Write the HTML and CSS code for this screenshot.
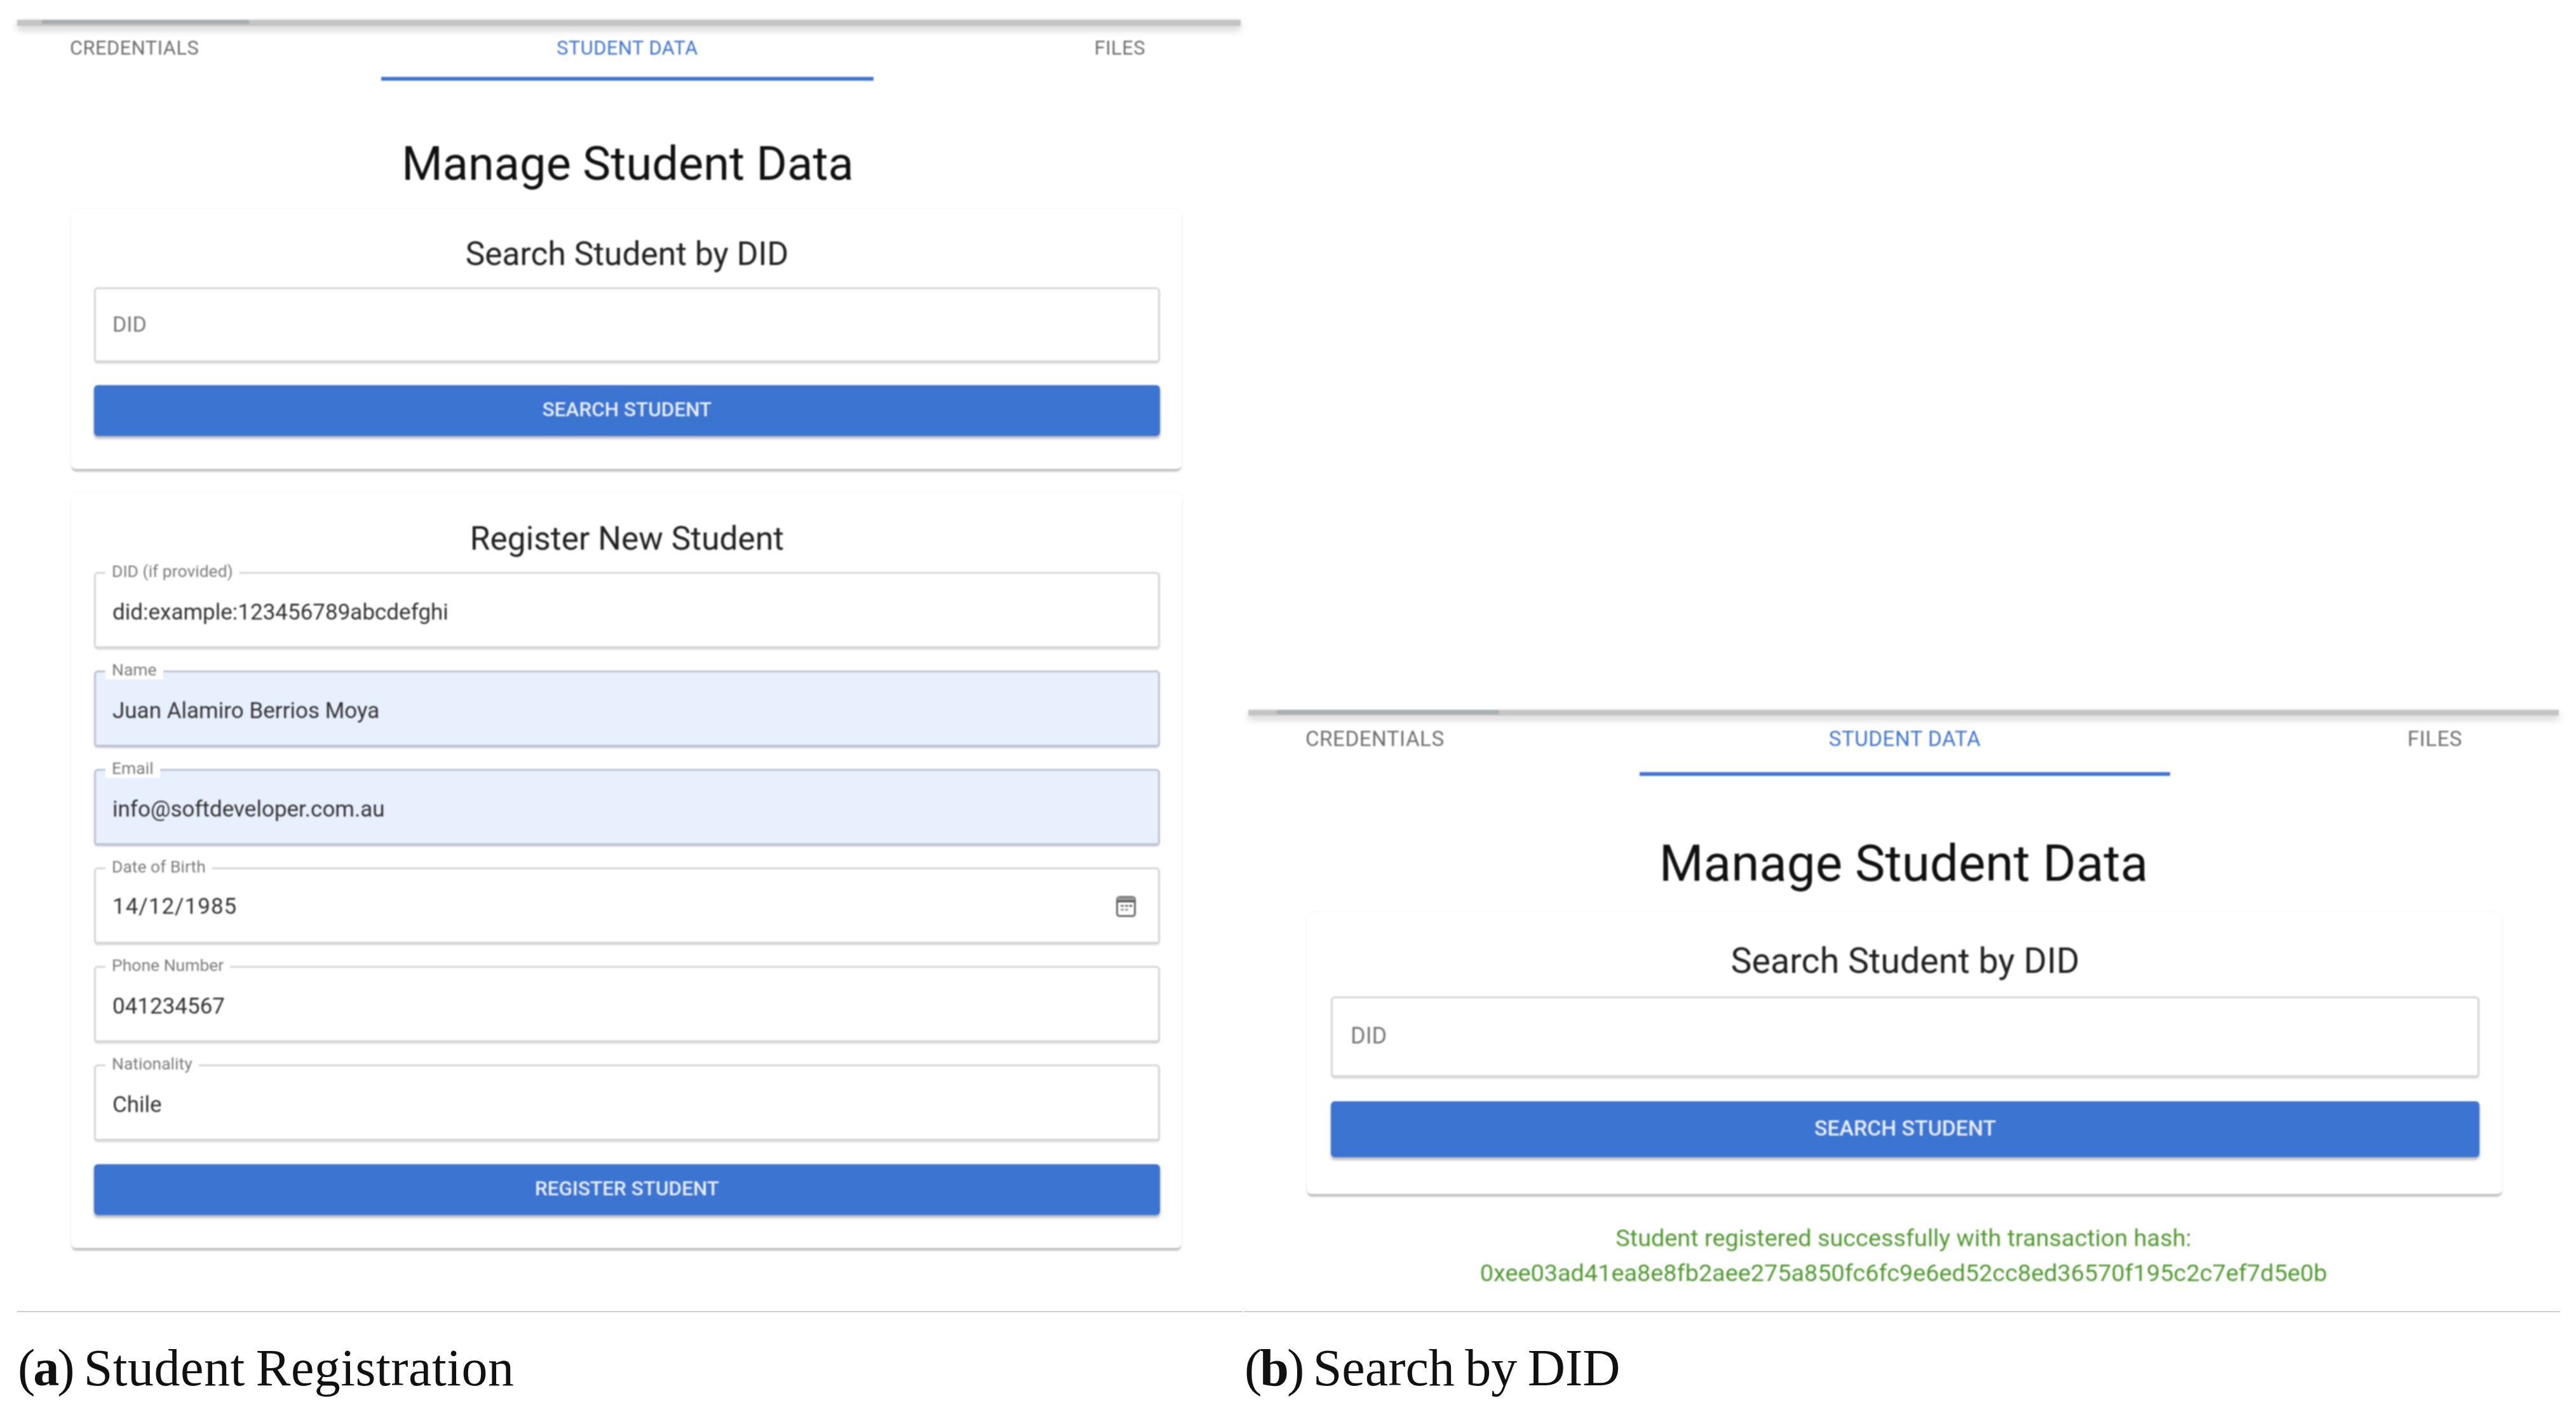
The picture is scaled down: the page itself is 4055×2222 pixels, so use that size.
FILE: index.html
```html
<!DOCTYPE html>
<html lang="en">
<head>
<meta charset="utf-8">
<title>Student Registration and Search by DID</title>
<link rel="stylesheet" href="styles.css">
</head>
<body>
<main class="page">
  <figure class="figure figure-a">
    <div class="panel">
      <div class="bar"><div class="bar-mark"></div></div>
      <nav class="tabs">
        <div class="tab tab-first">CREDENTIALS</div>
        <div class="tab tab-active">STUDENT DATA</div>
        <div class="tab tab-last">FILES</div>
      </nav>
      <h1 class="title">Manage Student Data</h1>
      <section class="card">
        <h2 class="card-title">Search Student by DID</h2>
        <div class="field field-tight"><span class="placeholder">DID</span></div>
        <button class="action">SEARCH STUDENT</button>
      </section>
      <section class="card card-second">
        <h2 class="card-title">Register New Student</h2>
        <div class="stack">
          <div class="field"><span class="label">DID (if provided)</span><span class="value">did:example:123456789abcdefghi</span></div>
          <div class="field field-filled"><span class="label">Name</span><span class="value">Juan Alamiro Berrios Moya</span></div>
          <div class="field field-filled"><span class="label">Email</span><span class="value">info@softdeveloper.com.au</span></div>
          <div class="field field-date"><span class="label">Date of Birth</span><span class="value value-date">14/12/1985</span>
            <svg class="calendar" viewBox="0 0 31 33" aria-hidden="true"><rect x="1.5" y="1.5" width="28" height="30" rx="4" fill="#fff" stroke="#6a6a6a" stroke-width="3"/><rect x="2" y="2" width="27" height="5" fill="#999"/><rect x="2" y="7" width="27" height="3" fill="#555"/><rect x="7" y="14" width="5" height="3" fill="#777"/><rect x="14" y="14" width="5" height="3" fill="#777"/><rect x="21" y="14" width="4" height="3" fill="#555"/><rect x="7" y="20" width="5" height="3" fill="#999"/><rect x="14" y="20" width="5" height="3" fill="#999"/></svg>
          </div>
          <div class="field"><span class="label">Phone Number</span><span class="value">041234567</span></div>
          <div class="field"><span class="label">Nationality</span><span class="value">Chile</span></div>
          <button class="action">REGISTER STUDENT</button>
        </div>
      </section>
    </div>
    <div class="rule"></div>
    <figcaption class="caption"><span class="caption-tag">(<b>a</b>)</span> Student Registration</figcaption>
  </figure>

  <figure class="figure figure-b">
    <div class="panel">
      <div class="bar"><div class="bar-mark"></div></div>
      <nav class="tabs">
        <div class="tab tab-first">CREDENTIALS</div>
        <div class="tab tab-active">STUDENT DATA</div>
        <div class="tab tab-last">FILES</div>
      </nav>
      <h1 class="title">Manage Student Data</h1>
      <section class="card">
        <h2 class="card-title">Search Student by DID</h2>
        <div class="field field-tight"><span class="placeholder">DID</span></div>
        <button class="action">SEARCH STUDENT</button>
      </section>
      <p class="message">Student registered successfully with transaction hash:<br>0xee03ad41ea8e8fb2aee275a850fc6fc9e6ed52cc8ed36570f195c2c7ef7d5e0b</p>
    </div>
    <div class="rule"></div>
    <figcaption class="caption"><span class="caption-tag">(<b>b</b>)</span> Search by DID</figcaption>
  </figure>
</main>
</body>
</html>
```

FILE: styles.css
```css
* { box-sizing: border-box; }

html, body { margin: 0; background: #fff; }

.page {
  width: 4055px;
  height: 2222px;
  display: grid;
  grid-template-columns: 1931px 2072px;
  padding-left: 27px;
  font-family: Roboto, "Liberation Sans", sans-serif;
  overflow: hidden;
}

.figure { margin: 0; display: flex; flex-direction: column; }

.panel { height: 2063px; filter: blur(1.1px); }

.figure-a .panel { width: 1928px; padding-top: 31px; }
.figure-b .panel { width: 2063px; margin-left: 7px; padding-top: 1117px; }

/* top bar */
.bar { height: 10px; background: #c4c4c4; box-shadow: 0 6px 12px rgba(0, 0, 0, 0.2); }
.bar-mark { height: 7px; background: #a9afb1; }
.figure-a .bar { width: 1926px; }
.figure-a .bar-mark { width: 326px; margin-left: 39px; }
.figure-b .bar { height: 9px; }
.figure-b .bar-mark { width: 349px; margin-left: 45px; }

/* tabs */
.tabs { display: grid; }
.figure-a .tabs { grid-template-columns: 573px 775px 1fr; height: 86px; }
.figure-b .tabs { grid-template-columns: 616px 835px 1fr; height: 95px; }

.tab { color: #6f6f6f; font-weight: 400; font-size: 30.8px; letter-spacing: 0.5px; line-height: 34px; padding-top: 18px; }
.figure-b .tab { font-size: 33.2px; line-height: 38px; padding-top: 18px; }

.tab-active { color: #3f76d3; text-align: center; }
.figure-a .tab-active { border-bottom: 6px solid #3f76d3; }
.figure-b .tab-active { border-bottom: 6px solid #3f76d3; }
.figure-a .tab-first { padding-left: 83px; }
.figure-b .tab-first { padding-left: 90px; }
.tab-last { text-align: right; padding-right: 152px; }

/* headings */
.title { margin: 0; text-align: center; font-weight: 400; color: #111; }
.figure-a .title { margin-top: 92px; font-size: 74px; line-height: 78px; margin-right: 6px; margin-bottom: -2px; }
.figure-b .title { margin-top: 97px; font-size: 80px; line-height: 82px; }

/* cards */
.card {
  background: #fff;
  border-radius: 8px;
  box-shadow: 0 5px 3px -1px rgba(0, 0, 0, 0.26), 0 0 5px rgba(0, 0, 0, 0.05);
}
.figure-a .card { width: 1748px; margin: 35px 0 0 85px; padding: 40px 34px 52px 36px; }
.figure-a .card-second { margin-top: 38px; padding-top: 42px; }
.figure-b .card { width: 1882px; margin: 36px 0 0 92px; padding: 44px 36px 58px 38px; }

.card-title { margin: 0; text-align: center; font-weight: 400; color: #222; }
.figure-a .card-title { font-size: 51.5px; line-height: 60px; margin-bottom: 22px; }
.figure-b .card-title { font-size: 55.6px; line-height: 64px; margin-bottom: 24px; }

/* fields */
.stack { display: flex; flex-direction: column; gap: 34px; }

.field {
  position: relative;
  display: flex;
  align-items: center;
  height: 121px;
  padding: 6px 26px 0;
  border: 3px solid #d6d6d6;
  border-bottom-width: 4px;
  border-radius: 6px;
  background: #fff;
  box-shadow: 0 2px 2px rgba(0, 0, 0, 0.1);
}
.figure-b .field { height: 128px; padding: 0 28px; }
.field-tight { padding-top: 0; }
.figure-a .field-tight { height: 119px; margin-bottom: 35px; }
.figure-b .field-tight { margin-bottom: 37px; }
.field-filled { background: #e8effd; border-color: #bdc3d2; }
.field-date { justify-content: space-between; padding-right: 35px; }

.label {
  position: absolute;
  left: 15px;
  top: -19px;
  padding: 0 10px;
  background: #fff;
  color: #7c7c7c;
  font-size: 26.5px;
  line-height: 30px;
}
.value { color: #333; font-size: 35px; }
.value-date { letter-spacing: 1px; margin-bottom: 3px; }
.placeholder { color: #777; font-size: 34px; margin-bottom: 3px; }
.figure-b .placeholder { font-size: 36px; }
.calendar { width: 31px; height: 33px; margin-bottom: 3px; }

/* buttons */
.action {
  display: block;
  width: 100%;
  border: 0;
  border-radius: 6px;
  padding: 0 0 3px;
  background: #3c74d1;
  color: #e9effa;
  font: 500 31.5px Roboto, "Liberation Sans", sans-serif;
  box-shadow: 0 4px 4px rgba(0, 0, 0, 0.3);
}
.figure-a .action { height: 80px; }
.figure-a .stack .action { margin-top: 2px; }
.figure-b .action { height: 88px; font-size: 33.8px; }

/* success message */
.message {
  margin: 42px 0 0;
  text-align: center;
  color: #4f9a2f;
  font-size: 37.8px;
  line-height: 55px;
}

/* figure footer */
.rule { height: 2px; background: #cfcfcf; }
.figure-a .rule { width: 1929px; }

.caption {
  margin-top: 55px;
  font-family: "Liberation Serif", serif;
  font-size: 82px;
  line-height: 66px;
  word-spacing: -4px;
  color: #111;
  padding-left: 1px;
}
.figure-a .caption { letter-spacing: 0.5px; }
.caption-tag { letter-spacing: -3px; }
```
